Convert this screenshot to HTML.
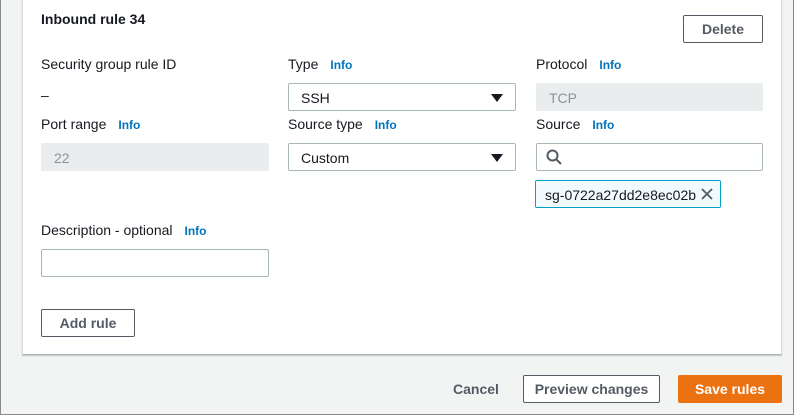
<!DOCTYPE html>
<html><head><style>
*{box-sizing:border-box;margin:0;padding:0}
body{width:794px;height:415px;overflow:hidden;background:#f2f3f3;font-family:"Liberation Sans",sans-serif;color:#16191f;position:relative}
.frame{position:absolute;left:0;top:0;width:794px;height:415px;border:1px solid #8a8a8a;border-top:none}
.panel{position:absolute;left:22px;top:0;width:760px;height:355px;background:#fff;border-left:1px solid #d5dbdb;border-right:1px solid #d5dbdb;border-bottom:1px solid #aab7b8;box-shadow:0 1px 1px rgba(0,28,36,.2)}
.a{position:absolute}
.lbl{font-size:14px;color:#16191f}
.info{font-size:12px;font-weight:bold;color:#0073bb;margin-left:12px}
.inp{position:absolute;height:28px;border:1px solid #aab7b8;border-radius:2px;background:#fff;font-size:14px;padding:6px 12px;line-height:16px}
.dis{background:#eaeded;border-color:#eaeded;color:#879596}
.btn{position:absolute;height:28px;border:1px solid #545b64;border-radius:2px;background:#fff;font-size:14px;font-weight:bold;color:#545b64;text-align:center;line-height:26px}
.tri{position:absolute;right:12px;top:10px;width:0;height:0;border-left:6px solid transparent;border-right:6px solid transparent;border-top:8px solid #16191f}
</style></head><body>
<div class="panel"></div>
<div class="a" style="left:41px;top:11px;font-size:14px;font-weight:bold">Inbound rule 34</div>
<div class="btn" style="left:683px;top:15px;width:80px">Delete</div>

<div class="a lbl" style="left:41px;top:56px">Security group rule ID</div>
<div class="a lbl" style="left:288px;top:56px">Type<span class="info">Info</span></div>
<div class="a lbl" style="left:536px;top:56px">Protocol<span class="info">Info</span></div>
<div class="a lbl" style="left:41px;top:87px">–</div>
<div class="inp" style="left:288px;top:83px;width:228px">SSH<div class="tri"></div></div>
<div class="inp dis" style="left:536px;top:83px;width:227px">TCP</div>

<div class="a lbl" style="left:41px;top:116px">Port range<span class="info">Info</span></div>
<div class="a lbl" style="left:288px;top:116px">Source type<span class="info">Info</span></div>
<div class="a lbl" style="left:536px;top:116px">Source<span class="info">Info</span></div>
<div class="inp dis" style="left:41px;top:143px;width:228px">22</div>
<div class="inp" style="left:288px;top:143px;width:228px">Custom<div class="tri"></div></div>
<div class="inp" style="left:536px;top:143px;width:227px"><svg width="16" height="16" viewBox="0 0 16 16" style="position:absolute;left:9px;top:5px"><circle cx="6.5" cy="6.5" r="5" fill="none" stroke="#545b64" stroke-width="2"/><path d="M10 10 L15 15" stroke="#545b64" stroke-width="2"/></svg></div>
<div class="a" style="left:535px;top:180px;width:186px;height:28px;border:1px solid #00a1c9;background:#f1faff;border-radius:2px;font-size:14px;padding:6px 9px;line-height:16px">sg-0722a27dd2e8ec02b<svg width="12" height="12" viewBox="0 0 12 12" style="position:absolute;right:7px;top:7px"><path d="M1 1L11 11M11 1L1 11" stroke="#545b64" stroke-width="1.8"/></svg></div>

<div class="a lbl" style="left:41px;top:222px">Description - optional<span class="info">Info</span></div>
<div class="inp" style="left:41px;top:249px;width:228px"></div>
<div class="btn" style="left:41px;top:309px;width:94px">Add rule</div>

<div class="a" style="left:453px;top:381px;font-size:14px;font-weight:bold;color:#545b64">Cancel</div>
<div class="btn" style="left:523px;top:375px;width:137px">Preview changes</div>
<div class="btn" style="left:678px;top:375px;width:104px;background:#ec7211;border-color:#ec7211;color:#fff">Save rules</div>
<div class="frame"></div>
</body></html>
